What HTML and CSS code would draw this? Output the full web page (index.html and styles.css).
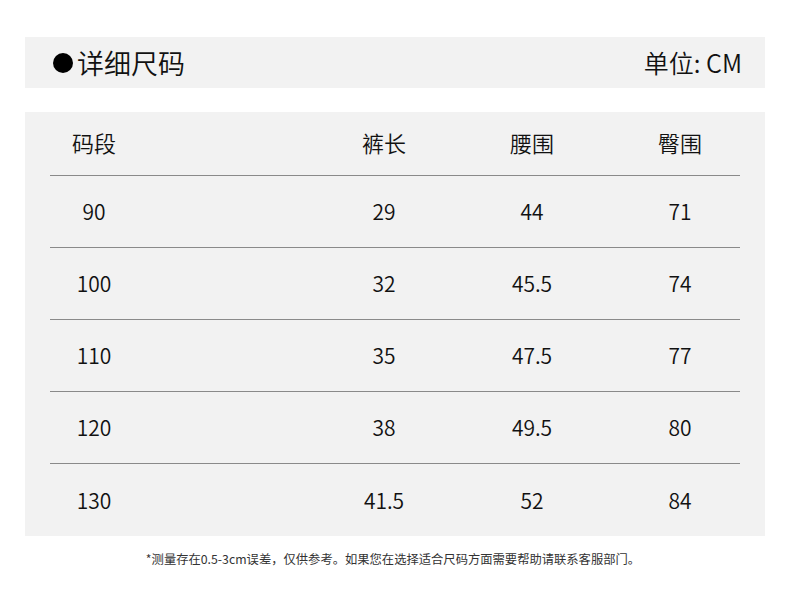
FILE: index.html
```html
<!DOCTYPE html>
<html lang="zh">
<head>
<meta charset="utf-8">
<link rel="stylesheet" href="styles.css">
</head>
<body>
<div class="page">
  <div class="title-bar">
    <div class="title"><span class="dot"></span>详细尺码</div>
    <div class="unit">单位: CM</div>
  </div>
  <div class="table">
    <div class="row head">
      <div class="cell">码段</div><div class="cell"></div><div class="cell">裤长</div><div class="cell">腰围</div><div class="cell">臀围</div>
    </div>
    <div class="row">
      <div class="cell">90</div><div class="cell"></div><div class="cell">29</div><div class="cell">44</div><div class="cell">71</div>
    </div>
    <div class="row">
      <div class="cell">100</div><div class="cell"></div><div class="cell">32</div><div class="cell">45.5</div><div class="cell">74</div>
    </div>
    <div class="row">
      <div class="cell">110</div><div class="cell"></div><div class="cell">35</div><div class="cell">47.5</div><div class="cell">77</div>
    </div>
    <div class="row">
      <div class="cell">120</div><div class="cell"></div><div class="cell">38</div><div class="cell">49.5</div><div class="cell">80</div>
    </div>
    <div class="row last">
      <div class="cell">130</div><div class="cell"></div><div class="cell">41.5</div><div class="cell">52</div><div class="cell">84</div>
    </div>
  </div>
  <div class="note">*测量存在0.5-3cm误差，仅供参考。如果您在选择适合尺码方面需要帮助请联系客服部门。</div>
</div>
</body>
</html>
```

FILE: styles.css
```css
html, body {
  margin: 0;
  padding: 0;
  background: #ffffff;
}
body {
  font-family: "Noto Sans CJK SC", "Noto Sans", sans-serif;
  font-weight: 350;
  color: #111111;
}
.page {
  width: 790px;
  height: 600px;
  padding: 37px 25px 0 25px;
  box-sizing: border-box;
  display: flex;
  flex-direction: column;
}
.title-bar {
  height: 51px;
  background: #f2f2f2;
  display: flex;
  align-items: center;
  justify-content: space-between;
  padding: 0 23px 0 28px;
}
.title {
  display: flex;
  align-items: center;
  font-size: 27px;
  line-height: 1;
  gap: 4px;
}
.dot {
  width: 20px;
  height: 20px;
  border-radius: 50%;
  background: #000;
  display: inline-block;
}
.unit {
  font-size: 25px;
  line-height: 1;
}
.table {
  margin-top: 24px;
  height: 424px;
  background: #f2f2f2;
  padding: 0 25px;
  box-sizing: border-box;
}
.row {
  display: grid;
  grid-template-columns: 88px 172px 148px 148px 148px;
  width: 690px;
  height: 72px;
  align-items: center;
  border-bottom: 1px solid #8a8a8a;
  box-sizing: border-box;
  font-size: 21px;
}
.row.head {
  height: 64px;
  font-size: 22px;
  padding-bottom: 4px;
}
.row.last {
  border-bottom: none;
}
.cell {
  text-align: center;
  line-height: 1;
}
.note {
  margin-top: 14px;
  text-align: center;
  font-size: 12.3px;
  font-weight: 400;
  color: #333;
  padding-right: 4px;
}
```
